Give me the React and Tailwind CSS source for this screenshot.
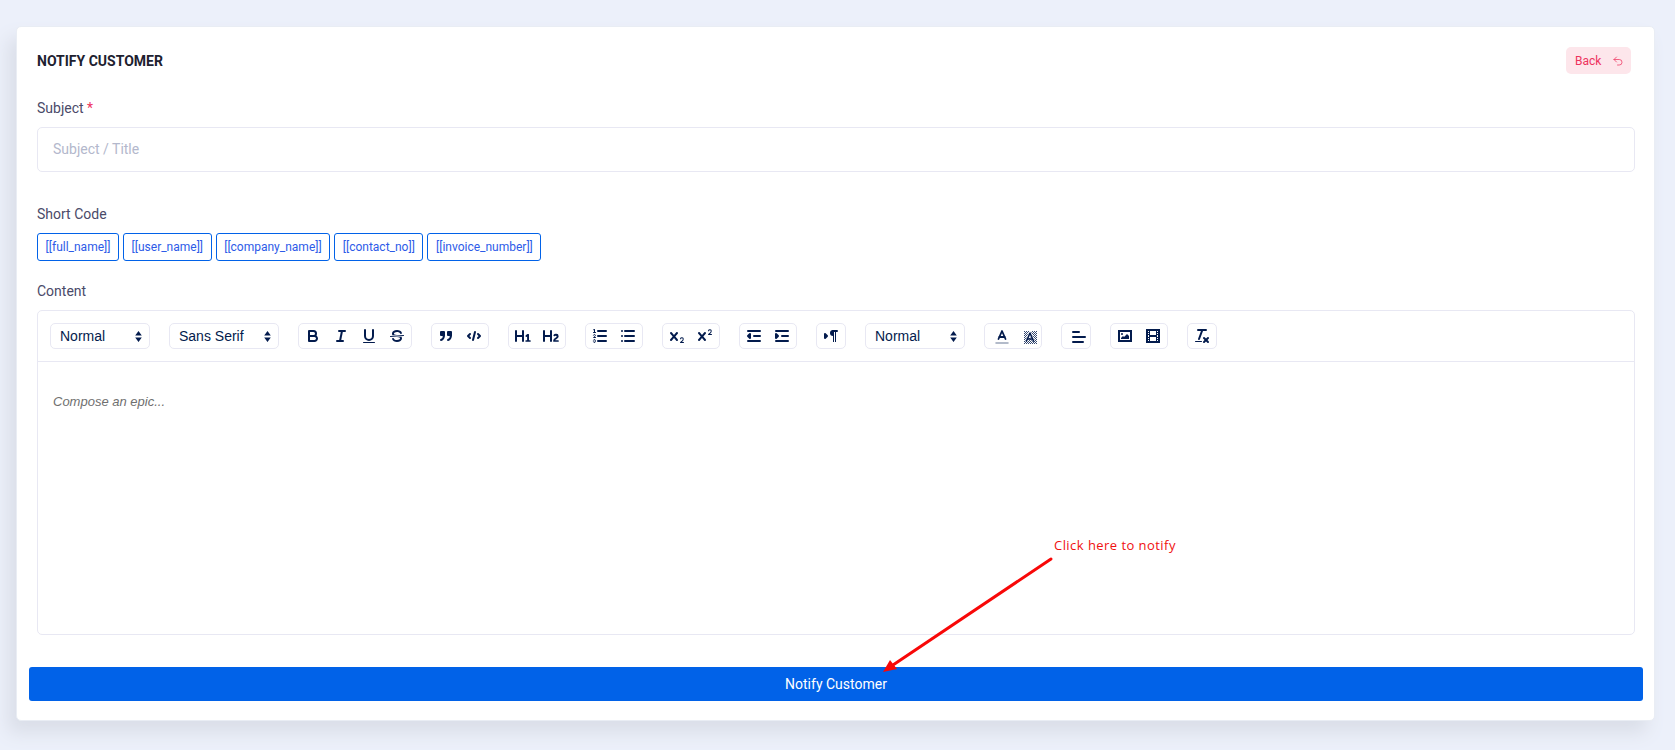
import React from 'react';
import { Undo2 } from 'lucide-react';

const SHORT_CODES = ['[[full_name]]', '[[user_name]]', '[[company_name]]', '[[contact_no]]', '[[invoice_number]]'];

// Editor toolbar glyphs, drawn on an 18x18 grid
const S = { fill: 'none', stroke: 'currentColor', strokeWidth: 2, strokeLinecap: 'round', strokeLinejoin: 'round' };
const T = { ...S, strokeWidth: 1 };
const F = { fill: 'currentColor', stroke: 'none' };
const FS = { fill: 'currentColor', stroke: 'currentColor', strokeWidth: 2, strokeLinecap: 'round', strokeLinejoin: 'round' };

const Line = ({ a, x1, x2, y1, y2 }) => <line {...a} x1={x1} x2={x2} y1={y1} y2={y2} />;

const dither = [];
for (let y = 3; y < 16; y++) {
  for (let x = 3; x < 16; x++) {
    if ((x + y) % 2 === 0) dither.push([x, y]);
  }
}

const ICONS = {
  bold: (
    <>
      <path {...S} d="M5,4H9.5A2.5,2.5,0,0,1,12,6.5v0A2.5,2.5,0,0,1,9.5,9H5A0,0,0,0,1,5,9V4A0,0,0,0,1,5,4Z" />
      <path {...S} d="M5,9h5.5A2.5,2.5,0,0,1,13,11.5v0A2.5,2.5,0,0,1,10.5,14H5a0,0,0,0,1,0,0V9A0,0,0,0,1,5,9Z" />
    </>
  ),
  italic: (
    <>
      <Line a={S} x1={7} x2={13} y1={4} y2={4} />
      <Line a={S} x1={5} x2={11} y1={14} y2={14} />
      <Line a={S} x1={8} x2={10} y1={14} y2={4} />
    </>
  ),
  underline: (
    <>
      <path {...S} d="M5,3V9a4.012,4.012,0,0,0,4,4H9a4.012,4.012,0,0,0,4-4V3" />
      <rect {...F} height={1} rx={0.5} ry={0.5} width={12} x={3} y={15} />
    </>
  ),
  strike: (
    <>
      <Line a={T} x1={15.5} x2={2.5} y1={8.5} y2={9.5} />
      <path {...F} d="M9.007,8C6.542,7.791,6,7.519,6,6.5,6,5.792,7.283,5,9,5c1.571,0,2.765.679,2.969,1.309a1,1,0,0,0,1.9-.617C13.356,4.106,11.354,3,9,3,6.2,3,4,4.538,4,6.5a3.2,3.2,0,0,0,.5,1.843Z" />
      <path {...F} d="M8.984,10C11.457,10.208,12,10.479,12,11.5c0,.708-1.283,1.5-3,1.5-1.571,0-2.765-.679-2.969-1.309a1,1,0,1,0-1.9.617C4.644,13.894,6.646,15,9,15c2.8,0,5-1.538,5-3.5a3.2,3.2,0,0,0-.5-1.843Z" />
    </>
  ),
  quote: (
    <>
      <rect {...FS} height={3} width={3} x={4} y={5} />
      <rect {...FS} height={3} width={3} x={11} y={5} />
      <path {...FS} fill="none" d="M7,8c0,4.031-3,5-3,5" />
      <path {...FS} fill="none" d="M14,8c0,4.031-3,5-3,5" />
    </>
  ),
  code: (
    <>
      <polyline {...S} points="5 7 3 9 5 11" />
      <polyline {...S} points="13 7 15 9 13 11" />
      <Line a={S} x1={10} x2={8} y1={5} y2={13} />
    </>
  ),
  h1: <path {...F} d="M10,4V14a1,1,0,0,1-2,0V10H3v4a1,1,0,0,1-2,0V4A1,1,0,0,1,3,4V8H8V4a1,1,0,0,1,2,0Zm6.06787,9.209H14.98975V7.59863a.54085.54085,0,0,0-.605-.60547h-.62744a1.01119,1.01119,0,0,0-.748.29688L11.645,8.56641a.5435.5435,0,0,0-.022.8584l.28613.30762a.53861.53861,0,0,0,.84717.0332l.09912-.08789a1.2137,1.2137,0,0,0,.2417-.35254h.02246s-.01123.30859-.01123.60547V13.209H12.041a.54085.54085,0,0,0-.605.60547v.43945a.54085.54085,0,0,0,.605.60547h4.02686a.54085.54085,0,0,0,.605-.60547v-.43945A.54085.54085,0,0,0,16.06787,13.209Z" />,
  h2: <path {...F} d="M16.73975,13.81445v.43945a.54085.54085,0,0,1-.605.60547H11.855a.58392.58392,0,0,1-.64893-.60547V14.0127c0-2.90527,3.39941-3.42187,3.39941-4.55469a.77675.77675,0,0,0-.84717-.78125,1.17684,1.17684,0,0,0-.83594.38477c-.2749.26367-.561.374-.85791.13184l-.4292-.34082c-.30811-.24219-.38525-.51758-.1543-.81445a2.97155,2.97155,0,0,1,2.45361-1.17676,2.45393,2.45393,0,0,1,2.68408,2.40918c0,2.45312-3.1792,2.92676-3.27832,3.93848h2.79443A.54085.54085,0,0,1,16.73975,13.81445ZM9,3A.99974.99974,0,0,0,8,4V8H3V4A1,1,0,0,0,1,4V14a1,1,0,0,0,2,0V10H8v4a1,1,0,0,0,2,0V4A.99974.99974,0,0,0,9,3Z" />,
  ordered: (
    <>
      <Line a={S} x1={7} x2={15} y1={4} y2={4} />
      <Line a={S} x1={7} x2={15} y1={9} y2={9} />
      <Line a={S} x1={7} x2={15} y1={14} y2={14} />
      <Line a={T} x1={2.5} x2={4.5} y1={5.5} y2={5.5} />
      <path {...F} d="M3.5,6A0.5,0.5,0,0,1,3,5.5V3.085l-0.276.138A0.5,0.5,0,0,1,2.053,3c-0.124-.247-0.023-0.324.224-0.447l1-.5A0.5,0.5,0,0,1,4,2.5v3A0.5,0.5,0,0,1,3.5,6Z" />
      <path {...T} d="M4.5,10.5h-2c0-.234,1.85-1.076,1.85-2.234A0.959,0.959,0,0,0,2.5,8.156" />
      <path {...T} d="M2.5,14.846a0.959,0.959,0,0,0,1.85-.109A0.7,0.7,0,0,0,3.75,14a0.688,0.688,0,0,0,.6-0.736,0.959,0.959,0,0,0-1.85-.109" />
    </>
  ),
  bullet: (
    <>
      <Line a={S} x1={6} x2={15} y1={4} y2={4} />
      <Line a={S} x1={6} x2={15} y1={9} y2={9} />
      <Line a={S} x1={6} x2={15} y1={14} y2={14} />
      <Line a={S} x1={3} x2={3} y1={4} y2={4} />
      <Line a={S} x1={3} x2={3} y1={9} y2={9} />
      <Line a={S} x1={3} x2={3} y1={14} y2={14} />
    </>
  ),
  sub: (
    <>
      <path {...F} d="M15.5,15H13.861a3.858,3.858,0,0,0,1.914-2.975,1.8,1.8,0,0,0-1.6-1.751A1.921,1.921,0,0,0,12.021,11.7a0.50013,0.50013,0,1,0,.957.291h0a0.914,0.914,0,0,1,1.053-.725,0.81,0.81,0,0,1,.744.762c0,1.076-1.16971,1.86982-1.93971,2.43082A1.45639,1.45639,0,0,0,12,15.5a0.5,0.5,0,0,0,.5.5h3A0.5,0.5,0,0,0,15.5,15Z" />
      <path {...F} d="M9.65,5.241a1,1,0,0,0-1.409.108L6,7.964,3.759,5.349A1,1,0,0,0,2.192,6.59178Q2.21541,6.6213,2.241,6.649L4.684,9.5,2.241,12.35A1,1,0,0,0,3.71,13.70722q0.02557-.02768.049-0.05722L6,11.036,8.241,13.65a1,1,0,1,0,1.567-1.24277Q9.78459,12.3777,9.759,12.35L7.316,9.5,9.759,6.651A1,1,0,0,0,9.65,5.241Z" />
    </>
  ),
  sup: (
    <>
      <path {...F} d="M15.5,7H13.861a4.015,4.015,0,0,0,1.914-2.975,1.8,1.8,0,0,0-1.6-1.751A1.922,1.922,0,0,0,12.021,3.7a0.5,0.5,0,1,0,.957.291,0.917,0.917,0,0,1,1.053-.725,0.81,0.81,0,0,1,.744.762c0,1.077-1.164,1.925-1.934,2.486A1.423,1.423,0,0,0,12,7.5a0.5,0.5,0,0,0,.5.5h3A0.5,0.5,0,0,0,15.5,7Z" />
      <path {...F} d="M9.651,5.241a1,1,0,0,0-1.41.108L6,7.964,3.759,5.349a1,1,0,1,0-1.519,1.3L4.683,9.5,2.241,12.35a1,1,0,1,0,1.519,1.3L6,11.036,8.241,13.65a1,1,0,0,0,1.519-1.3L7.317,9.5,9.759,6.651A1,1,0,0,0,9.651,5.241Z" />
    </>
  ),
  outdent: (
    <>
      <Line a={S} x1={3} x2={15} y1={14} y2={14} />
      <Line a={S} x1={3} x2={15} y1={4} y2={4} />
      <Line a={S} x1={9} x2={15} y1={9} y2={9} />
      <polyline {...FS} points="5 7 5 11 3 9 5 7" />
    </>
  ),
  indent: (
    <>
      <Line a={S} x1={3} x2={15} y1={14} y2={14} />
      <Line a={S} x1={3} x2={15} y1={4} y2={4} />
      <Line a={S} x1={9} x2={15} y1={9} y2={9} />
      <polyline {...FS} points="3 7 3 11 5 9 3 7" />
    </>
  ),
  direction: (
    <>
      <polygon {...FS} points="3 11 5 9 3 7 3 11" />
      <Line a={S} x1={15} x2={11} y1={4} y2={4} />
      <path {...F} d="M11,3a3,3,0,0,0,0,6h1V3H11Z" />
      <rect {...F} height={11} width={1} x={11} y={4} />
      <rect {...F} height={11} width={1} x={13} y={4} />
    </>
  ),
  color: (
    <>
      <Line a={{ ...S, opacity: 0.4, strokeWidth: 1.5 }} x1={3} x2={15} y1={15} y2={15} />
      <polyline {...S} strokeWidth={1.8} points="5.5 11 9 3 12.5 11" />
      <Line a={{ ...S, strokeWidth: 1.8 }} x1={11.63} x2={6.38} y1={9} y2={9} />
    </>
  ),
  background: (
    <>
      {dither.map(([x, y]) => (
        <rect key={`${x}-${y}`} {...F} opacity={0.8} height={1} width={1} x={x} y={y} />
      ))}
      <polyline fill="none" stroke="#fff" strokeWidth={3} points="5.5 13 9 5 12.5 13" />
      <polyline {...S} strokeWidth={1.6} points="5.5 13 9 5 12.5 13" />
      <Line a={{ ...S, strokeWidth: 1.6 }} x1={11.63} x2={6.38} y1={11} y2={11} />
    </>
  ),
  align: (
    <>
      <Line a={S} x1={3} x2={15} y1={9} y2={9} />
      <Line a={S} x1={3} x2={13} y1={14} y2={14} />
      <Line a={S} x1={3} x2={9} y1={4} y2={4} />
    </>
  ),
  image: (
    <>
      <rect {...S} strokeLinecap="butt" strokeLinejoin="miter" height={10} width={12} x={3} y={4} />
      <circle {...F} cx={6} cy={7} r={1} />
      <polyline {...F} points="5 12 5 11 7 9 8 10 11 7 13 9 13 12 5 12" />
    </>
  ),
  video: (
    <>
      <rect {...S} strokeLinecap="butt" strokeLinejoin="miter" height={12} width={12} x={3} y={3} />
      <rect {...F} height={12} width={1} x={5} y={3} />
      <rect {...F} height={12} width={1} x={12} y={3} />
      <rect {...F} height={2} width={8} x={5} y={8} />
      <rect {...F} height={1} width={3} x={3} y={5} />
      <rect {...F} height={1} width={3} x={3} y={7} />
      <rect {...F} height={1} width={3} x={3} y={10} />
      <rect {...F} height={1} width={3} x={3} y={12} />
      <rect {...F} height={1} width={3} x={12} y={5} />
      <rect {...F} height={1} width={3} x={12} y={7} />
      <rect {...F} height={1} width={3} x={12} y={10} />
      <rect {...F} height={1} width={3} x={12} y={12} />
    </>
  ),
  clean: (
    <>
      <Line a={S} x1={5} x2={13} y1={3} y2={3} />
      <Line a={S} x1={6} x2={9.35} y1={12} y2={3} />
      <Line a={S} x1={11} x2={15} y1={11} y2={15} />
      <Line a={S} x1={15} x2={11} y1={11} y2={15} />
      <rect {...F} height={1} rx={0.5} ry={0.5} width={7} x={2} y={14} />
    </>
  ),
};

// These three open a picker in the real editor, so their label sits a little off centre
const PICKERS = ['color', 'background', 'align'];

const ToolButton = ({ name }) => (
  <button type="button" className="flex h-6 w-7 items-center justify-center">
    <svg
      viewBox="0 0 18 18"
      className={PICKERS.includes(name) ? 'h-[18px] w-[18px] translate-x-[3px] translate-y-[1px]' : 'h-[18px] w-[18px]'}
    >
      {ICONS[name]}
    </svg>
  </button>
);

const ToolGroup = ({ items }) => (
  <div className="flex h-[26px] rounded-[5px] border border-[#e8e8f3]">
    {items.map(name => (
      <ToolButton key={name} name={name} />
    ))}
  </div>
);

const ToolSelect = ({ label, width }) => (
  <div className={`flex h-[26px] items-center justify-between rounded-[5px] border border-[#e8e8f3] pl-[9px] pr-[7px] text-sm ${width}`}>
    <span>{label}</span>
    <svg viewBox="0 0 6 10" className="h-[11px] w-[7px]">
      <path fill="currentColor" d="M3 0 6 4H0Z M3 10 0 6H6Z" />
    </svg>
  </div>
);

const App = () => {
  return (
    <div className="relative min-h-screen bg-[#ecf0fa] pl-4 pt-[26px] font-['Roboto',sans-serif] text-sm text-[#4a4a69]">
      <div className="flex w-[1639px] flex-col rounded-[5px] border border-[#e9edf4] bg-white pb-[19px] pl-5 pr-[19px] pt-5 shadow-[-8px_12px_18px_0_#dadee8]">
        <div className="flex h-[27px] items-center justify-between">
          <h4 className="text-sm font-bold uppercase text-[#1d212f]">Notify Customer</h4>
          <button type="button" className="mr-1 flex h-[27px] w-[65px] items-center rounded-[5px] bg-[#fde6eb] pl-[9px] text-xs text-[#ee335e]">
            <span>Back</span>
            <Undo2 size={12} strokeWidth={1.5} className="ml-[11px]" />
          </button>
        </div>

        <label className="mb-2 mt-6 h-[21px] leading-[21px]">
          Subject <span className="text-[#ee335e]">*</span>
        </label>
        <input
          type="text"
          placeholder="Subject / Title"
          className="h-[45px] w-full rounded-[5px] border border-[#e8e8f3] px-[15px] pb-[2px] text-sm outline-none placeholder:text-[#b3b8cc]"
        />

        <label className="mb-2 mt-8 h-[21px] leading-[21px]">Short Code</label>
        <div className="flex gap-1">
          {SHORT_CODES.map(code => (
            <button key={code} type="button" className="h-[28px] rounded-[3px] border border-[#0162e8] px-[7.6px] text-xs text-[#2d5be8]">
              {code}
            </button>
          ))}
        </div>

        <label className="mb-2 mt-5 h-[21px] leading-[21px]">Content</label>
        <div className="h-[325px] rounded-[5px] border border-[#e8e8f3]">
          <div className="flex h-[51px] items-start gap-[19px] border-b border-[#e8e8f3] pl-3 pt-3 font-['Liberation_Sans',sans-serif] text-[#031b4d]">
            <ToolSelect label="Normal" width="w-[100px]" />
            <ToolSelect label="Sans Serif" width="w-[110px]" />
            <ToolGroup items={['bold', 'italic', 'underline', 'strike']} />
            <ToolGroup items={['quote', 'code']} />
            <ToolGroup items={['h1', 'h2']} />
            <ToolGroup items={['ordered', 'bullet']} />
            <ToolGroup items={['sub', 'sup']} />
            <ToolGroup items={['outdent', 'indent']} />
            <ToolGroup items={['direction']} />
            <ToolSelect label="Normal" width="w-[100px]" />
            <ToolGroup items={['color', 'background']} />
            <ToolGroup items={['align']} />
            <ToolGroup items={['image', 'video']} />
            <ToolGroup items={['clean']} />
          </div>
          <p className="px-[15px] pt-[30px] font-['Liberation_Sans',sans-serif] text-[13px] italic leading-[20px] text-[#6f6f6f]">Compose an epic...</p>
        </div>

        <button type="button" className="mx-[-8px] mt-8 h-[34px] rounded-[3px] bg-[#0162e8] text-sm font-normal text-white">
          Notify Customer
        </button>
      </div>

      {/* Annotation drawn on top of the screenshot */}
      <span className="absolute left-[1054px] top-[535px] font-['Open_Sans',sans-serif] text-[13px] leading-[20px] tracking-[0.45px] text-[#f01010]">
        Click here to notify
      </span>
      <svg className="pointer-events-none absolute left-0 top-0 h-[750px] w-[1675px]" viewBox="0 0 1675 750">
        <line x1="1051" y1="559" x2="893" y2="665" stroke="#f80808" strokeWidth="3" strokeLinecap="round" />
        <polygon points="883,672 890,660 897,669" fill="#f80808" />
      </svg>
    </div>
  );
};

export default App;
